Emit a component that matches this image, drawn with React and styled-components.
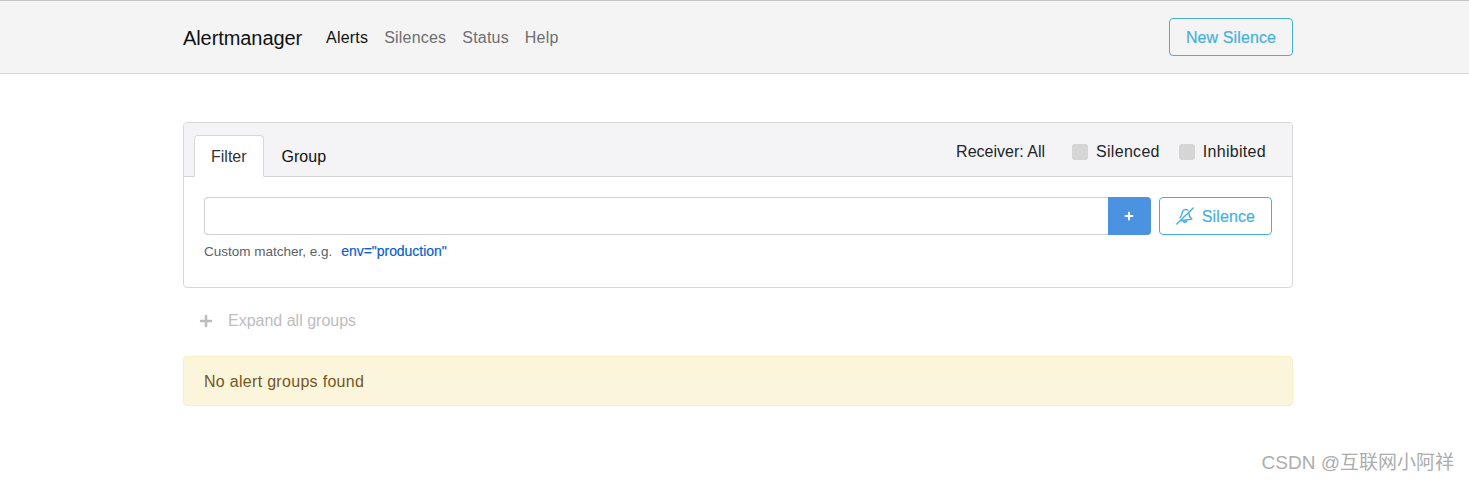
import React from "react";
import styled, { createGlobalStyle } from "styled-components";
import { FaPlus } from "react-icons/fa";

const Global = createGlobalStyle`
  html, body { margin: 0; padding: 0; background: #fff; }
  body { font-family: "Liberation Sans", Arial, sans-serif; font-size: 16px; line-height: 24px; color: #212529; }
  * { box-sizing: border-box; }
`;
const Page = styled.div`position: relative; height: 482px; overflow: hidden;`;
const Navbar = styled.nav`
  height: 74px; background: #f4f4f5; border-top: 1px solid #c4c4c4; border-bottom: 1px solid #d6d6d6;
  padding: 1px 0 0 183px; display: flex;
`;
const Container = styled.div`width: 1110px; display: flex; align-items: center; justify-content: space-between;`;
const NavLeft = styled.div`display: flex; align-items: center;`;
const Brand = styled.a`font-size: 20px; color: #111; margin-right: 24px; line-height: 30px; letter-spacing: -.08px;`;
const NavLink = styled.a`
  color: ${p => (p.$active ? "#111" : "#6e6e6e")};
  margin-right: 16px; font-size: 16px; letter-spacing: .2px;
`;
const OutlineButton = styled.button`
  font: inherit; color: #46b1d8; background: transparent; border: 1px solid #46b1d8; border-radius: 4px;
  letter-spacing: .1px; -webkit-text-stroke: .2px #46b1d8; display: inline-flex; align-items: center; justify-content: center;
  gap: 8px; height: 38px; padding: 2px 16px 0;
`;
const NavButton = styled(OutlineButton)`margin-bottom: 2px;`;
const Main = styled.main`width: 1110px; margin: 48px 0 0 183px;`;
const Card = styled.section`border: 1px solid #d8d8d8; border-radius: 4px; height: 166px; background: #fff;`;
const CardHeader = styled.div`
  height: 54px; background: #f4f4f6; border-bottom: 1px solid #d4d4d4; border-radius: 3px 3px 0 0;
  display: flex; align-items: flex-end; justify-content: space-between; padding: 0 26px 0 10px;
`;
const Tabs = styled.div`display: flex; gap: 1px; height: 42px; margin-bottom: -1px;`;
const Tab = styled.a`
  padding: 9px 16px 0; color: ${p => (p.$active ? "#333" : "#111")}; line-height: 24px;
  border: 1px solid ${p => (p.$active ? "#d8d8d8" : "transparent")};
  border-bottom-color: ${p => (p.$active ? "#fff" : "transparent")};
  background: ${p => (p.$active ? "#fff" : "transparent")};
  border-radius: 4px 4px 0 0;
`;
const Controls = styled.div`display: flex; align-items: center; height: 53px; padding-top: 4px; color: #212529;`;
const Receiver = styled.span`margin-right: 27px;`;
const CheckLabel = styled.label`display: flex; align-items: center; letter-spacing: .3px; margin-left: ${p => p.$gap || 0}px;`;
const CheckBox = styled.span`width: 16px; height: 16px; border-radius: 3px; background: #d5d5d5; margin-right: 8px;`;
const CardBody = styled.div`padding: 20px;`;
const InputRow = styled.div`display: flex;`;
const MatcherInput = styled.div`flex: 1; height: 38px; border: 1px solid #ced0d2; border-right: 0; border-radius: 4px 0 0 4px;`;
const AddButton = styled.button`
  width: 43px; height: 38px; background: #4b93e0; border: 0; border-radius: 0 4px 4px 0; color: #fff;
  display: flex; align-items: center; justify-content: center; padding: 0; margin-right: 8px;
`;
const Hint = styled.div`font-size: 13.5px; line-height: 19px; margin-top: 7px; color: #5a6268; display: flex;`;
const Example = styled.a`color: #0a5fc8; margin-left: 9px; font-size: 14px; letter-spacing: -.05px; -webkit-text-stroke: .2px #0a5fc8;`;
const Expand = styled.div`
  display: flex; align-items: center; height: 24px; margin: 21px 0 23px; padding-left: 16px; color: #bdbdbd;
`;
const ExpandLabel = styled.span`margin-left: 15px;`;
const Alert = styled.div`
  height: 50px; background: #fbf6db; border: 1px solid #f8efc4; border-radius: 4px; color: #74561f;
  padding: 13px 20px 0; line-height: 24px; letter-spacing: .3px;
`;
const Watermark = styled.div`
  position: absolute; right: 15px; top: 451px; font-size: 19px; line-height: 24px; color: #adadad;
  font-family: "Liberation Sans", "Noto Sans CJK SC", sans-serif; white-space: nowrap;
`;
const BellIcon = styled.svg`width: 18px; height: 18px; flex: none; margin-top: -2px;`;

function BellSlash() {
  return (
    <BellIcon viewBox="0 0 18 18" fill="none" stroke="currentColor" strokeWidth="1.4" strokeLinecap="round" strokeLinejoin="round">
      <path d="M0.8 17 17.2 1" />
      <path d="M4 10.8C5.8 9 5.8 6.6 6.6 4.6 7.4 2.6 10 1.8 12 3.2" />
      <path d="M13 6.4C13 8.6 13.8 10.6 15.8 12L4.6 13.8" />
      <path d="M7.4 14.8A2 2 0 0 0 10.6 14" fill="currentColor" />
    </BellIcon>
  );
}

export default function App() {
  return (
    <Page>
      <Global />
      <Navbar>
        <Container>
          <NavLeft>
            <Brand>Alertmanager</Brand>
            <NavLink $active>Alerts</NavLink>
            <NavLink>Silences</NavLink>
            <NavLink>Status</NavLink>
            <NavLink>Help</NavLink>
          </NavLeft>
          <NavButton>New Silence</NavButton>
        </Container>
      </Navbar>
      <Main>
        <Card>
          <CardHeader>
            <Tabs>
              <Tab $active>Filter</Tab>
              <Tab>Group</Tab>
            </Tabs>
            <Controls>
              <Receiver>Receiver: All</Receiver>
              <CheckLabel><CheckBox />Silenced</CheckLabel>
              <CheckLabel $gap={19}><CheckBox />Inhibited</CheckLabel>
            </Controls>
          </CardHeader>
          <CardBody>
            <InputRow>
              <MatcherInput />
              <AddButton aria-label="Add"><FaPlus size={10} /></AddButton>
              <OutlineButton><BellSlash />Silence</OutlineButton>
            </InputRow>
            <Hint>Custom matcher, e.g.<Example>env="production"</Example></Hint>
          </CardBody>
        </Card>
        <Expand><FaPlus size={14} /><ExpandLabel>Expand all groups</ExpandLabel></Expand>
        <Alert>No alert groups found</Alert>
      </Main>
      <Watermark>CSDN @互联网小阿祥</Watermark>
    </Page>
  );
}
